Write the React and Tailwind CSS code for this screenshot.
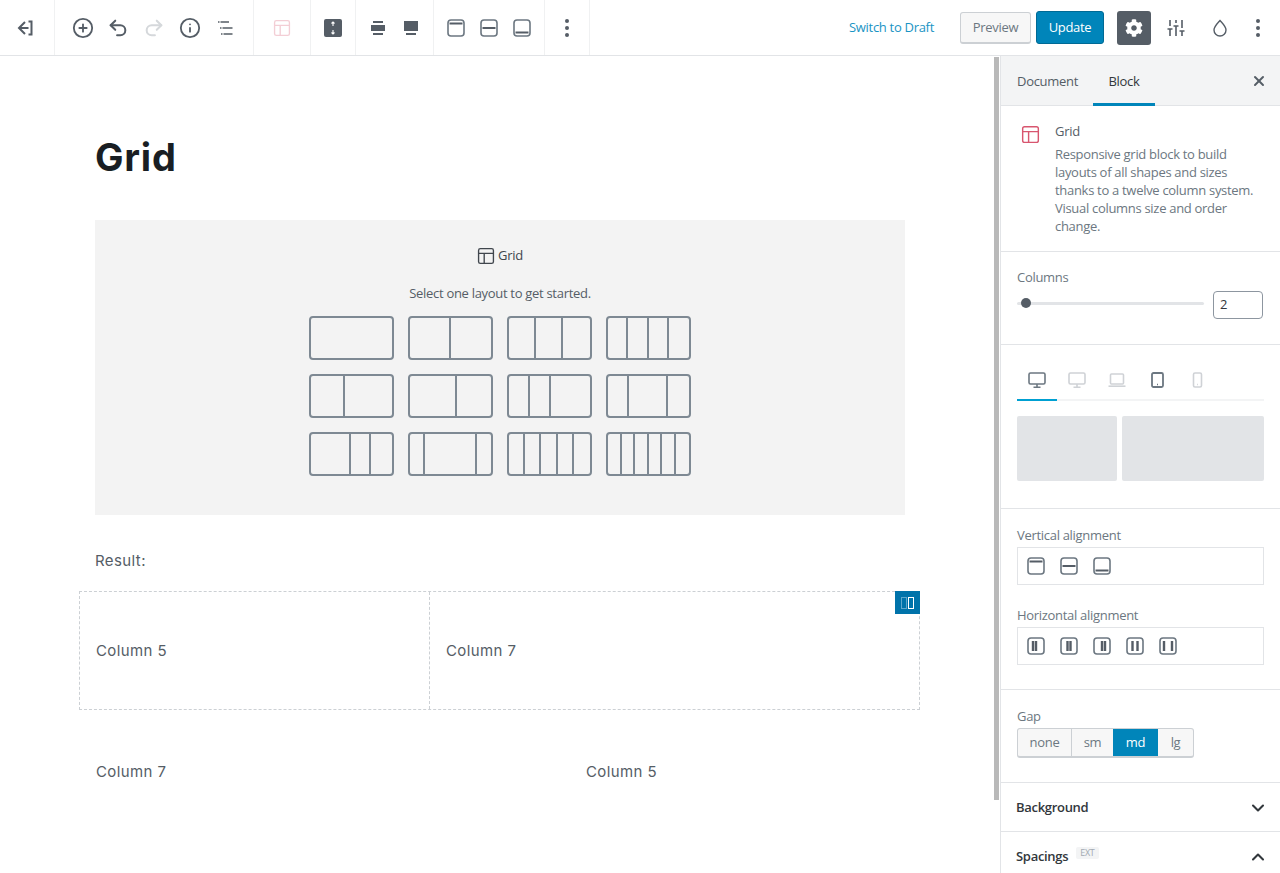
import { CirclePlus, Undo2, Redo2, Info, X, ChevronDown, ChevronUp } from "lucide-react";
import { FaCog } from "react-icons/fa";

const UI_FONT = "font-['Open_Sans','Noto_Sans',sans-serif] tracking-[-0.3px]";

const LAYOUTS = [
  ["flex-[1]"],
  ["flex-[1]", "flex-[1]"],
  ["flex-[1]", "flex-[1]", "flex-[1]"],
  ["flex-[1]", "flex-[1]", "flex-[1]", "flex-[1]"],
  ["flex-[5]", "flex-[7]"],
  ["flex-[7]", "flex-[5]"],
  ["flex-[3]", "flex-[3]", "flex-[6]"],
  ["flex-[3]", "flex-[6]", "flex-[3]"],
  ["flex-[6]", "flex-[3]", "flex-[3]"],
  ["flex-[2]", "flex-[8]", "flex-[2]"],
  ["flex-[1]", "flex-[1]", "flex-[1]", "flex-[1]", "flex-[1]"],
  ["flex-[1]", "flex-[1]", "flex-[1]", "flex-[1]", "flex-[1]", "flex-[1]"],
];

function GridIcon({ className }) {
  return (
    <svg viewBox="0 0 20 20" fill="none" stroke="currentColor" strokeWidth="1.5" className={className}>
      <rect x="1.75" y="1.75" width="16.5" height="16.5" rx="2" />
      <path d="M1.75 7h16.5M8 7v11.25" />
    </svg>
  );
}

function Dots() {
  return (
    <svg viewBox="0 0 24 24" fill="#555d66" className="w-6 h-6">
      <circle cx="12" cy="5" r="2" />
      <circle cx="12" cy="12" r="2" />
      <circle cx="12" cy="19" r="2" />
    </svg>
  );
}

function AlignV({ pos, className = "w-[18px] h-[18px]" }) {
  const y = pos === "top" ? 4.5 : pos === "mid" ? 9 : 13.5;
  return (
    <svg viewBox="0 0 18 18" fill="none" className={className}>
      <rect x="1" y="1" width="16" height="16" rx="3" stroke="#6c7781" strokeWidth="1.6" />
      <path d={`M2.5 ${y}h13`} stroke="#555d66" strokeWidth="2" />
    </svg>
  );
}

function AlignH({ bars }) {
  return (
    <svg viewBox="0 0 18 18" fill="none" className="w-[18px] h-[18px]">
      <rect x="1" y="1" width="16" height="16" rx="3" stroke="#6c7781" strokeWidth="1.6" />
      <path d={`M${bars[0]} 4v10M${bars[1]} 4v10`} stroke="#555d66" strokeWidth="2.4" />
    </svg>
  );
}

function Device({ kind, muted }) {
  const color = muted ? "#cfd2d6" : "#6c7781";
  return (
    <svg viewBox="0 0 20 20" fill="none" stroke={color} strokeWidth="1.6" className="w-5 h-5">
      {kind === "desktop" && (
        <>
          <rect x="2" y="3" width="16" height="11" rx="1.5" />
          <path d="M10 14v3M6.5 17.2h7" />
        </>
      )}
      {kind === "laptop" && (
        <>
          <rect x="3.5" y="4" width="13" height="10" rx="1" />
          <path d="M1.5 16.2h17" />
        </>
      )}
      {kind === "tablet" && (
        <>
          <rect x="5" y="3" width="11" height="14" rx="1.5" strokeWidth="1.8" />
          <path d="M10 14.5h1" />
        </>
      )}
      {kind === "phone" && (
        <>
          <rect x="6.5" y="3" width="8" height="14" rx="1.5" />
          <path d="M10.1 14.5h.8" />
        </>
      )}
    </svg>
  );
}

function ToolGroup({ className, children }) {
  return (
    <div className={`h-full flex items-center justify-center border-r border-[#f0f1f2] ${className}`}>
      {children}
    </div>
  );
}

function Tool({ className = "w-9", children }) {
  return <div className={`h-9 flex items-center justify-center text-[#555d66] ${className}`}>{children}</div>;
}

function Toolbar() {
  return (
    <header className="h-[56px] flex items-center border-b border-[#e2e4e7] bg-white">
      <ToolGroup className="w-[55px]">
        <svg viewBox="0 0 20 20" fill="none" stroke="#555d66" strokeWidth="2" className="w-5 h-5 mr-[4px]">
          <path d="M10 4l-6 6 6 6M4 10h9.5M13.500 3.500h3v13h-3" />
        </svg>
      </ToolGroup>
      <ToolGroup className="w-[199px]">
        <Tool><CirclePlus className="ml-[1px] w-[22px] h-[22px]" strokeWidth={2} /></Tool>
        <Tool><Undo2 className="w-[22px] h-[22px]" strokeWidth={2.2} /></Tool>
        <Tool><Redo2 className="w-[22px] h-[22px] text-[#d5d8db]" strokeWidth={2.2} /></Tool>
        <Tool><Info className="w-[22px] h-[22px]" strokeWidth={2} /></Tool>
        <Tool>
          <svg viewBox="0 0 20 20" fill="none" stroke="#555d66" strokeWidth="1.6" className="w-5 h-5">
            <path d="M2 4h1.500M4.500 4h8.500M4 10h1.500M6.500 10h10M5 16h1.500M7.500 16h9" />
          </svg>
        </Tool>
      </ToolGroup>
      <ToolGroup className="w-[57px]">
        <GridIcon className="w-[18px] h-[18px] text-[#f3ced5]" />
      </ToolGroup>
      <ToolGroup className="w-[45px]">
        <svg viewBox="0 0 18 18" className="w-[18px] h-[18px]">
          <rect width="18" height="18" rx="2" fill="#555d66" />
          <path d="M9 3v4M7.500 4.500L9 3l1.500 1.500M9 11v4M7.500 13.500L9 15l1.500-1.500" stroke="#fff" strokeWidth="1.100" fill="none" />
        </svg>
      </ToolGroup>
      <ToolGroup className="w-[78px]">
        <Tool className="w-[33px]">
          <svg viewBox="0 0 18 18" fill="#555d66" className="w-[18px] h-[18px]">
            <path d="M4 2h10v2H4zM2 6h14v6H2zM4 14h10v2H4z" />
          </svg>
        </Tool>
        <Tool className="w-[33px]">
          <svg viewBox="0 0 18 18" fill="#555d66" className="w-[18px] h-[18px]">
            <path d="M2 2h14v10H2zM4 14h10v2H4z" />
          </svg>
        </Tool>
      </ToolGroup>
      <ToolGroup className="w-[111px]">
        <Tool className="w-[33px]"><AlignV pos="top" /></Tool>
        <Tool className="w-[33px]"><AlignV pos="mid" /></Tool>
        <Tool className="w-[33px]"><AlignV pos="bottom" /></Tool>
      </ToolGroup>
      <ToolGroup className="w-[45px]">
        <Dots />
      </ToolGroup>

      <div className={`ml-auto flex items-center h-full ${UI_FONT}`}>
        <span className="text-[13px] text-[#1a94c4] mr-[26px] pt-px">Switch to Draft</span>
        <span className="w-[71px] h-[32px] flex items-center justify-center pt-px rounded-[3px] border border-[#ccd0d4] border-b-2 bg-[#f7f7f7] text-[13px] text-[#6c7781] mr-[5px]">
          Preview
        </span>
        <span className="w-[68px] h-[33px] flex items-center justify-center rounded-[3px] bg-[#0085ba] border border-[#006a95] text-[13px] text-white mr-[13px]">
          Update
        </span>
        <span className="w-[34px] h-[34px] flex items-center justify-center rounded-[3px] bg-[#555d66] text-white mr-[7px]">
          <FaCog className="w-[18px] h-[18px]" />
        </span>
        <Tool className="w-9">
          <svg viewBox="0 0 20 20" fill="none" stroke="#555d66" strokeWidth="1.6" className="w-5 h-5">
            <path d="M4 2v6M4 11v7M1.500 11h5M10 2v3M10 8v10M7.500 8h5M16 2v8M16 13v5M13.500 13h5" />
          </svg>
        </Tool>
        <Tool className="w-9 ml-2">
          <svg viewBox="0 0 20 20" fill="none" stroke="#555d66" strokeWidth="1.400" className="w-5 h-5">
            <path d="M10 2.500c2.500 3 6 6 6 9.500a6 6 0 0 1-12 0c0-3.500 3.500-6.500 6-9.500z" />
          </svg>
        </Tool>
        <Tool className="w-9 ml-[2px] mr-[4px]"><Dots /></Tool>
      </div>
    </header>
  );
}

function LayoutTile({ cols }) {
  return (
    <div className="w-[85px] h-[44px] flex pr-[2px] rounded-[4px] border-2 border-[#7e8993]">
      {cols.map((c, i) => (
        <div key={i} className={`${c} ${i > 0 ? "border-l-2 border-[#7e8993]" : ""}`} />
      ))}
    </div>
  );
}

function Editor() {
  return (
    <div className="w-[994px] pl-[80px] overflow-hidden">
      <h1 className="ml-[15px] mt-[78px] h-[46px] text-[38px] leading-[46px] tracking-[0.8px] font-bold text-[#191e23] font-['Inter',sans-serif]">
        Grid
      </h1>
      <div className={`ml-[15px] mt-[40px] w-[810px] h-[295px] bg-[#f3f3f3] pt-[26px] flex flex-col items-center ${UI_FONT}`}>
        <div className="h-[20px] flex items-center gap-[3px] text-[13px] font-medium text-[#40464d]">
          <GridIcon className="w-[18px] h-[18px] text-[#40464d]" />
          Grid
        </div>
        <p className="mt-[18px] text-[13px] leading-[18px] text-[#555d66]">Select one layout to get started.</p>
        <div className="mt-[14px] grid grid-cols-4 gap-[14px]">
          {LAYOUTS.map((cols, i) => (
            <LayoutTile key={i} cols={cols} />
          ))}
        </div>
      </div>
      <p className="ml-[15px] mt-[34px] text-[15px] leading-6 tracking-[0.4px] text-[#555d66] font-['Inter',sans-serif]">Result:</p>
      <div className="relative mt-[18px] -ml-px w-[841px] h-[119px] flex border border-dashed border-[#ccd0d4] text-[15px] tracking-[0.4px] text-[#555d66] font-['Inter',sans-serif]">
        <div className="w-[350px] flex items-center pl-[16px] pt-px border-r border-dashed border-[#ccd0d4]">Column 5</div>
        <div className="flex-1 flex items-center pl-[16px] pt-px">Column 7</div>
        <div className="absolute -top-px -right-px w-[25px] h-[23px] bg-[#0073aa] flex items-center justify-center gap-[1px]">
          <span className="w-[6px] h-[12px] border border-[#5fa8cc]" />
          <span className="w-[6px] h-[12px] border border-white" />
        </div>
      </div>
      <div className="mt-[50px] w-[840px] flex text-[15px] leading-6 tracking-[0.4px] text-[#555d66] font-['Inter',sans-serif]">
        <div className="w-[490px] pl-[16px]">Column 7</div>
        <div className="flex-1 pl-[16px]">Column 5</div>
      </div>
    </div>
  );
}

function Label({ children }) {
  return <div className="text-[13px] leading-[18px] text-[#6c7781]">{children}</div>;
}

function Sidebar() {
  return (
    <aside className={`flex-1 border-l border-[#e2e4e7] bg-white ${UI_FONT}`}>
      <div className="h-[50px] flex items-stretch bg-[#f3f4f5] border-b border-[#e2e4e7] text-[13px] pl-[16px]">
        <div className="w-[76px] flex items-center pt-[2px] text-[#555d66]">Document</div>
        <div className="w-[62px] flex items-center justify-center font-medium text-[#32373c] border-b-[3px] border-[#0085ba] -mb-px pt-[5px]">
          Block
        </div>
        <div className="ml-auto mr-[13px] flex items-center text-[#555d66]">
          <X className="w-[16px] h-[16px]" strokeWidth={3} />
        </div>
      </div>

      <section className="h-[146px] pt-[16px] pl-[20px] pr-[16px] flex gap-[15px] border-b border-[#e2e4e7]">
        <GridIcon className="mt-[3px] w-[19px] h-[19px] shrink-0 text-[#d8566f]" />
        <div className="text-[13px] text-[#6c7781]">
          <div className="leading-[18px] font-medium text-[#555d66]">Grid</div>
          <p className="mt-[5px] leading-[18px] w-[205px]">
            Responsive grid block to build layouts of all shapes and sizes thanks to a twelve column system. Visual columns size and order change.
          </p>
        </div>
      </section>

      <section className="h-[93px] pt-[16px] px-[16px] border-b border-[#e2e4e7]">
        <Label>Columns</Label>
        <div className="mt-[5px] flex items-center">
          <div className="relative mb-[4px] w-[187px] h-[3px] rounded bg-[#e2e4e7]">
            <span className="absolute left-[4px] -top-[3.5px] w-[10px] h-[10px] rounded-full bg-[#555d66]" />
          </div>
          <div className="ml-[9px] w-[50px] h-[28px] flex items-center pl-[6px] rounded-[4px] border border-[#8d96a0] text-[13px] font-medium text-[#32373c]">
            2
          </div>
        </div>
      </section>

      <section className="h-[164px] pt-[16px] px-[16px] border-b border-[#e2e4e7]">
        <div className="h-[40px] flex border-b-2 border-[#f3f4f5]">
          <div className="w-[40px] h-[40px] flex items-center justify-center border-b-2 border-[#00a0d2]"><Device kind="desktop" /></div>
          <div className="w-[40px] flex items-center justify-center"><Device kind="desktop" muted /></div>
          <div className="w-[40px] flex items-center justify-center"><Device kind="laptop" muted /></div>
          <div className="w-[40px] flex items-center justify-center"><Device kind="tablet" /></div>
          <div className="w-[40px] flex items-center justify-center"><Device kind="phone" muted /></div>
        </div>
        <div className="mt-[15px] flex gap-[5px] h-[65px]">
          <div className="w-[100px] rounded-[2px] bg-[#e2e4e7]" />
          <div className="flex-1 rounded-[2px] bg-[#e2e4e7]" />
        </div>
      </section>

      <section className="h-[181px] pt-[17px] px-[16px] border-b border-[#e2e4e7]">
        <Label>Vertical alignment</Label>
        <div className="mt-[3px] h-[38px] flex items-center pl-[9px] gap-[15px] border border-[#e2e4e7]">
          <AlignV pos="top" />
          <AlignV pos="mid" />
          <AlignV pos="bottom" />
        </div>
        <div className="mt-[21px]"><Label>Horizontal alignment</Label></div>
        <div className="mt-[3px] h-[38px] flex items-center pl-[9px] gap-[15px] border border-[#e2e4e7]">
          <AlignH bars={[6, 9]} />
          <AlignH bars={[7.5, 10.5]} />
          <AlignH bars={[9, 12]} />
          <AlignH bars={[6.5, 11.5]} />
          <AlignH bars={[5, 13]} />
        </div>
      </section>

      <section className="h-[93px] pt-[17px] px-[16px] border-b border-[#e2e4e7]">
        <Label>Gap</Label>
        <div className="mt-[3px] w-[177px] h-[30px] flex text-[13px] text-[#6c7781] rounded-[3px] overflow-hidden border border-[#ccd0d4] border-b-2 bg-[#f7f7f7]">
          <div className="w-[54px] flex items-center justify-center pt-px border-r border-[#ccd0d4]">none</div>
          <div className="w-[41px] flex items-center justify-center pt-px">sm</div>
          <div className="w-[45px] -my-px -mb-[2px] flex items-center justify-center bg-[#0085ba] text-white">md</div>
          <div className="flex-1 flex items-center justify-center pt-px">lg</div>
        </div>
      </section>

      <section className="h-[49px] pl-[15px] pr-[12px] pt-px flex items-center justify-between border-b border-[#e2e4e7] text-[13px] font-semibold text-[#32373c]">
        Background
        <ChevronDown className="w-[20px] h-[20px] text-[#32373c]" strokeWidth={2.5} />
      </section>
      <section className="h-[49px] pl-[15px] pr-[12px] flex items-center justify-between text-[13px] font-semibold text-[#32373c]">
        <span className="flex items-center">
          Spacings
          <span className="ml-[8px] -mt-[8px] px-[4px] h-[12px] flex items-center rounded-[2px] bg-[#f3f4f5] text-[9px] font-normal text-[#a2aab2]">EXT</span>
        </span>
        <ChevronUp className="w-[20px] h-[20px] text-[#32373c]" strokeWidth={2.5} />
      </section>
    </aside>
  );
}

export default function App() {
  return (
    <div className="h-[873px] overflow-hidden bg-white">
      <Toolbar />
      <div className="flex h-[817px]">
        <Editor />
        <div className="w-[6px] pt-px">
          <div className="w-[5px] h-[743px] bg-[#b9b9b9]" />
        </div>
        <Sidebar />
      </div>
    </div>
  );
}
